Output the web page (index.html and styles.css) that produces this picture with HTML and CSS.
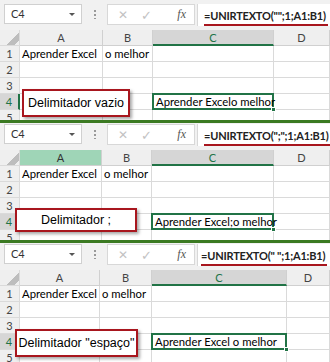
FILE: index.html
```html
<!DOCTYPE html>
<html lang="pt">
<head>
  <meta charset="UTF-8" />
  <title>UNIRTEXTO</title>
  <link rel="stylesheet" href="styles.css">
</head>
<body>
  <!-- exemplo 1: delimitador vazio -->
  <section class="sheet s1">
    <div class="fbar">
      <div class="namebox">C4<span class="caret"></span></div>
      <div class="dots"></div>
      <div class="tools"><span class="x">&#x2715;</span><span class="ok">&#x2713;</span><span class="fx">fx</span></div>
      <div class="formula"><span class="ftext">=UNIRTEXTO("";1;A1:B1)</span></div>
    </div>
    <div class="grid">
      <div class="corner"></div><div class="ch">A</div><div class="ch">B</div><div class="ch act">C</div><div class="ch">D</div>
      <div class="rh">1</div><div class="c">Aprender Excel</div><div class="c">o melhor</div><div class="c"></div><div class="c"></div>
      <div class="rh">2</div><div class="c"></div><div class="c"></div><div class="c"></div><div class="c"></div>
      <div class="rh">3</div><div class="c"></div><div class="c"></div><div class="c"></div><div class="c"></div>
      <div class="rh act">4</div><div class="c"></div><div class="c"></div><div class="c sel">Aprender Excelo melhor</div><div class="c"></div>
      <div class="rh">5</div><div class="c"></div><div class="c"></div><div class="c"></div><div class="c"></div>
    </div>
    <div class="note">Delimitador vazio</div>
  </section>

  <!-- exemplo 2: delimitador ponto e vírgula -->
  <section class="sheet s2">
    <div class="fbar">
      <div class="namebox">C4<span class="caret"></span></div>
      <div class="dots"></div>
      <div class="tools"><span class="x">&#x2715;</span><span class="ok">&#x2713;</span><span class="fx">fx</span></div>
      <div class="formula"><span class="ftext">=UNIRTEXTO(";";1;A1:B1)</span></div>
    </div>
    <div class="grid">
      <div class="corner"></div><div class="ch mint">A</div><div class="ch">B</div><div class="ch act">C</div><div class="ch">D</div>
      <div class="rh">1</div><div class="c">Aprender Excel</div><div class="c">o melhor</div><div class="c"></div><div class="c"></div>
      <div class="rh">2</div><div class="c"></div><div class="c"></div><div class="c"></div><div class="c"></div>
      <div class="rh">3</div><div class="c"></div><div class="c"></div><div class="c"></div><div class="c"></div>
      <div class="rh act">4</div><div class="c"></div><div class="c"></div><div class="c sel">Aprender Excel;o melhor</div><div class="c"></div>
      <div class="rh">5</div><div class="c"></div><div class="c"></div><div class="c"></div><div class="c"></div>
    </div>
    <div class="note">Delimitador ;</div>
  </section>

  <!-- exemplo 3: delimitador espaço -->
  <section class="sheet s3">
    <div class="fbar">
      <div class="namebox">C4<span class="caret"></span></div>
      <div class="dots"></div>
      <div class="tools"><span class="x">&#x2715;</span><span class="ok">&#x2713;</span><span class="fx">fx</span></div>
      <div class="formula"><span class="ftext">=UNIRTEXTO(" ";1;A1:B1)</span></div>
    </div>
    <div class="grid">
      <div class="corner"></div><div class="ch">A</div><div class="ch">B</div><div class="ch act">C</div><div class="ch">D</div>
      <div class="rh">1</div><div class="c">Aprender Excel</div><div class="c">o melhor</div><div class="c"></div><div class="c"></div>
      <div class="rh">2</div><div class="c"></div><div class="c"></div><div class="c"></div><div class="c"></div>
      <div class="rh">3</div><div class="c"></div><div class="c"></div><div class="c"></div><div class="c"></div>
      <div class="rh act">4</div><div class="c"></div><div class="c"></div><div class="c sel">Aprender Excel o melhor</div><div class="c"></div>
      <div class="rh">5</div><div class="c"></div><div class="c"></div><div class="c"></div><div class="c"></div>
    </div>
    <div class="note">Delimitador "espaço"</div>
  </section>
</body>
</html>
```

FILE: styles.css
```css
/* base */
body {
  margin: 0;
  width: 330px;
  height: 362px;
  overflow: hidden;
  background: #fff;
  font-family: Lato, "Liberation Sans", sans-serif;
  color: #000;
}

/* cada exemplo */
.sheet {
  position: relative;
  height: 120px;
  overflow: hidden;
}
.s2, .s3 {
  border-top: 3px solid #3b7a22;
  height: 117px;
}
.s3 {
  height: 119px;
}

/* barra de fórmulas */
.fbar {
  display: flex;
  align-items: flex-start;
  height: 30px;
  padding-top: 4px;
  box-sizing: border-box;
  background: #f1f1f1;
}
.s2 .fbar, .s3 .fbar {
  height: 27px;
  padding-top: 1px;
}
.namebox {
  position: relative;
  width: 78px;
  height: 20px;
  margin-left: 4px;
  background: #fff;
  border: 1px solid #d0d0d0;
  box-sizing: border-box;
  font-size: 11px;
  line-height: 18px;
  padding-left: 6px;
  color: #333;
}
.caret {
  position: absolute;
  right: 6px;
  top: 8px;
  border-left: 3px solid transparent;
  border-right: 3px solid transparent;
  border-top: 3px solid #555;
}
.dots {
  width: 2px;
  height: 10px;
  margin: 5px 11px 0 12px;
  background: radial-gradient(circle, #999 0.8px, transparent 1px) 0 0 / 2px 4px;
}
.tools {
  display: flex;
  align-items: center;
  width: 88px;
  height: 21px;
  background: #fff;
  border: 1px solid #d8d8d8;
  box-sizing: border-box;
  color: #c2c2c2;
  font-size: 12px;
}
.tools .x { margin-left: 10px; }
.tools .ok { margin-left: 13px; font-size: 13px; }
.tools .fx {
  margin-left: auto;
  margin-right: 8px;
  font-family: "Liberation Serif", serif;
  font-style: italic;
  color: #555;
  font-size: 12px;
}
.formula {
  flex: 1;
  height: 22px;
  margin-left: 2px;
  background: #fff;
  border-left: 1px solid #d8d8d8;
  box-sizing: border-box;
  padding-left: 6px;
  white-space: nowrap;
  overflow: hidden;
}
.ftext {
  display: inline-block;
  font-size: 11px;
  font-weight: bold;
  letter-spacing: -0.2px;
  color: #222;
  line-height: 15px;
  padding: 0 2px 1px 0;
  border-bottom: 3px solid #a8161e;
}
.s3 .formula { padding-left: 3px; }

/* grade */
.grid {
  display: grid;
  grid-template-columns: 20px 83px 50px 121px 1fr;
  grid-auto-rows: 16px;
  font-size: 11.3px;
}
.s2 .grid { grid-template-columns: 20px 82px 50px 122px 1fr; }
.s3 .grid { grid-template-columns: 20px 80px 52px 135px 1fr; }

.grid > div {
  border-right: 1px solid #dadada;
  border-bottom: 1px solid #dadada;
  box-sizing: border-box;
  line-height: 15px;
  white-space: nowrap;
  overflow: hidden;
}
.corner {
  background: #efefef linear-gradient(135deg, transparent 62%, #bdbdbd 62%, #bdbdbd 86%, transparent 86%);
}
.ch, .rh {
  background: #efefef;
  color: #444;
  text-align: center;
  font-size: 11px;
}
.grid .ch { border-color: #d0d0d0; }
.grid .ch.act {
  background: #d6d6d6;
  border-bottom: 2px solid #217346;
  color: #217346;
}
.grid .ch.mint {
  background: #9fd5b7;
  color: #333;
}
.grid .rh.act {
  background: #d6d6d6;
  border-right: 2px solid #217346;
  color: #217346;
}
.c {
  padding-left: 2px;
  overflow: hidden;
}
.grid .sel {
  position: relative;
  overflow: visible;
  border: 2px solid #217346;
  margin: -1px 0 0 -1px;
  line-height: 13px;
  padding-left: 2px;
  clip-path: inset(0 -4px -4px 0);
}
.grid .sel::after {
  content: "";
  position: absolute;
  right: -4px;
  bottom: -4px;
  width: 5px;
  height: 5px;
  background: #217346;
  border: 1px solid #fff;
  box-sizing: border-box;
}

/* caixa de destaque */
.note {
  position: absolute;
  background: #fff;
  border: 2px solid #a8161e;
  box-sizing: border-box;
  box-shadow: 2px 2px 3px rgba(0, 0, 0, 0.35);
  font-family: "Liberation Sans", Arial, sans-serif;
  font-size: 12.5px;
  text-align: center;
}
.s1 .note { left: 22px; top: 89px; width: 108px; height: 28px; line-height: 24px; }
.s2 .note { left: 15px; top: 85px; width: 122px; height: 24px; line-height: 20px; }
.s3 .note { left: 15px; top: 86px; width: 123px; height: 28px; line-height: 24px; }
```
